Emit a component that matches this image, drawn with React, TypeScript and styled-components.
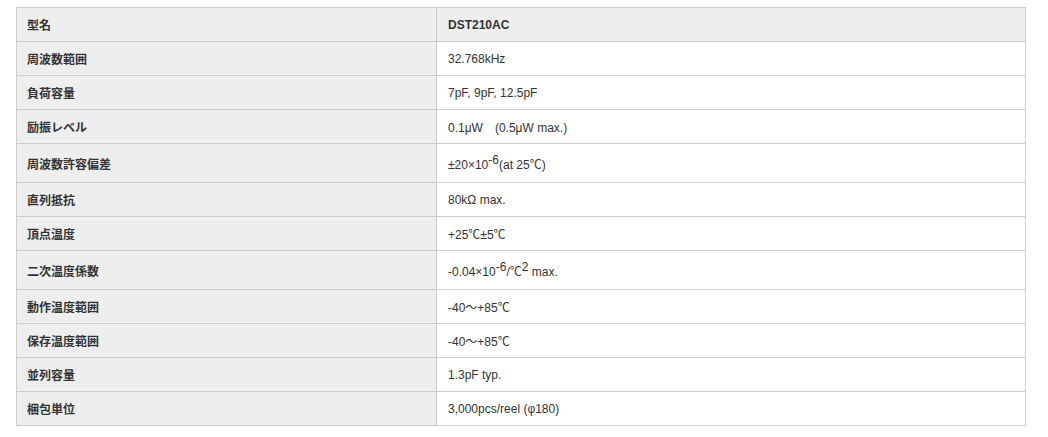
import React from "react";
import styled, { createGlobalStyle } from "styled-components";

const GlobalStyle = createGlobalStyle`
  html, body {
    margin: 0;
    padding: 0;
    background: #fff;
  }
  body {
    font-family: "Liberation Sans", Arial, "Noto Sans CJK JP", sans-serif;
    font-size: 12px;
    color: #333;
  }
`;

const Page = styled.div`
  padding: 7px 0 0 16px;
`;

const SpecTable = styled.table`
  width: 1010px;
  border-collapse: collapse;
  border: 1px solid #ccc;
  table-layout: fixed;
`;

const Row = styled.tr<{ $tall?: boolean }>`
  height: ${(p) => (p.$tall ? 39 : 34)}px;
`;

const Label = styled.th`
  width: 420px;
  box-sizing: border-box;
  padding: 0 10px;
  background: #eee;
  border: 1px solid #ccc;
  text-align: left;
  vertical-align: middle;
  font-family: "Liberation Sans", Arial, "Noto Sans CJK JP", sans-serif;
  font-weight: bold;
  font-size: 12px;
  color: #333;
`;

const Value = styled.td<{ $header?: boolean }>`
  padding: 0 11px;
  background: ${(p) => (p.$header ? "#eee" : "#fff")};
  border: 1px solid #ccc;
  vertical-align: middle;
  font-weight: ${(p) => (p.$header ? "bold" : "normal")};
  font-size: 12px;
  color: #333;
`;

const Sup = styled.sup`
  font-size: 12px;
  line-height: 0;
  vertical-align: super;
`;

interface Spec {
  label: string;
  value: React.ReactNode;
  tall?: boolean;
}

const specs: Spec[] = [
  { label: "周波数範囲", value: "32.768kHz" },
  { label: "負荷容量", value: "7pF, 9pF, 12.5pF" },
  { label: "励振レベル", value: "0.1μW　(0.5μW max.)" },
  {
    label: "周波数許容偏差",
    value: (
      <>
        ±20×10<Sup>-6</Sup>(at 25℃)
      </>
    ),
    tall: true,
  },
  { label: "直列抵抗", value: "80kΩ max." },
  { label: "頂点温度", value: "+25℃±5℃" },
  {
    label: "二次温度係数",
    value: (
      <>
        -0.04×10<Sup>-6</Sup>/℃<Sup>2</Sup> max.
      </>
    ),
    tall: true,
  },
  { label: "動作温度範囲", value: "-40～+85℃" },
  { label: "保存温度範囲", value: "-40～+85℃" },
  { label: "並列容量", value: "1.3pF typ." },
  { label: "梱包単位", value: "3,000pcs/reel (φ180)" },
];

const App: React.FC = () => {
  return (
    <Page>
      <GlobalStyle />
      <SpecTable>
        <tbody>
          <Row>
            <Label>型名</Label>
            <Value $header>DST210AC</Value>
          </Row>
          {specs.map((item, index) => (
            <Row key={index} $tall={item.tall}>
              <Label>{item.label}</Label>
              <Value>{item.value}</Value>
            </Row>
          ))}
        </tbody>
      </SpecTable>
    </Page>
  );
};

export default App;
